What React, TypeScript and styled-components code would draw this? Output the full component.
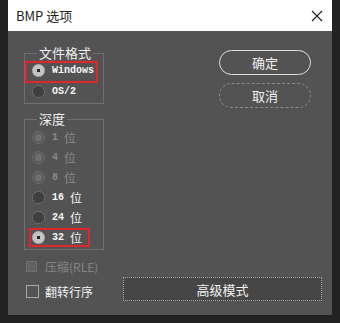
import * as React from "react";
import styled, { createGlobalStyle } from "styled-components";

const GlobalStyle = createGlobalStyle`
  html, body {
    margin: 0;
    padding: 0;
    background: #222222;
  }
  body {
    font-family: "Noto Sans CJK SC", "Liberation Sans", sans-serif;
  }
`;

const Page = styled.div`
  width: 340px;
  height: 323px;
  padding: 0 8px;
  box-sizing: border-box;
  background: #222222;
`;

const Dialog = styled.div`
  width: 324px;
  height: 315px;
  background: #535353;
  display: flex;
  flex-direction: column;
`;

const TitleBar = styled.div`
  height: 31px;
  flex: none;
  background: #ffffff;
  display: flex;
  align-items: center;
  justify-content: space-between;
  padding: 0 9px 0 8px;
`;

const Title = styled.span`
  font-size: 13px;
  color: #1e1e1e;
  line-height: 31px;
`;

const Body = styled.div`
  flex: 1;
  padding: 15px 10px 0 16px;
  display: flex;
  flex-direction: column;
`;

const TopRow = styled.div`
  display: flex;
  align-items: flex-start;
`;

const Groups = styled.div`
  display: flex;
  flex-direction: column;
  gap: 8px;
  width: 80px;
`;

const Group = styled.fieldset<{ $pad?: number }>`
  margin: 0;
  padding: ${(p) => p.$pad ?? 0}px 0 ${(p) => (p.$pad ? 2 : 1)}px 0;
  border: 1px solid #707070;
  min-width: 0;
`;

const Legend = styled.legend`
  margin-left: 12px;
  padding: 0 2px;
  font-size: 13px;
  line-height: 14px;
  color: #f0f0f0;
`;

const Row = styled.div<{ $h: number; $disabled?: boolean }>`
  position: relative;
  height: ${(p) => p.$h}px;
  display: flex;
  align-items: center;
  padding-left: 7px;
  color: ${(p) => (p.$disabled ? "#8a8a8a" : "#f6f6f6")};
`;

const Highlight = styled.span<{ $l: number; $t: number; $w: number; $h: number }>`
  position: absolute;
  left: ${(p) => p.$l}px;
  top: ${(p) => p.$t}px;
  width: ${(p) => p.$w}px;
  height: ${(p) => p.$h}px;
  box-sizing: border-box;
  border: 2px solid #e3262b;
  pointer-events: none;
`;

const Radio = styled.span<{ $checked?: boolean; $disabled?: boolean }>`
  width: 13px;
  height: 13px;
  box-sizing: border-box;
  border-radius: 50%;
  flex: none;
  border: 1px dotted ${(p) => (p.$disabled ? "#7a7a7a" : "#9a9a9a")};
  background: ${(p) =>
    p.$checked
      ? "radial-gradient(circle, #2a2a2a 0 1.5px, #c4c4c4 2px)"
      : p.$disabled
      ? "radial-gradient(circle, #6e6e6e 0 3px, #5c5c5c 4px)"
      : "#3f3f3f"};
  margin-right: 7px;
`;

const Num = styled.span`
  font-family: "Liberation Mono", "DejaVu Sans Mono", monospace;
  font-size: 10px;
  font-weight: 600;
  white-space: pre;
`;

const Unit = styled.span`
  font-size: 12px;
`;

const ButtonCol = styled.div`
  margin-left: auto;
  margin-right: 11px;
  margin-top: 4px;
  display: flex;
  flex-direction: column;
  gap: 8px;
`;

const PillButton = styled.div<{ $primary?: boolean }>`
  width: 92px;
  height: 25px;
  box-sizing: border-box;
  border-radius: 13px;
  border: 1px ${(p) => (p.$primary ? "solid #dcdcdc" : "dashed #8c8c8c")};
  display: flex;
  align-items: center;
  justify-content: center;
  font-size: 13px;
  color: #f2f2f2;
`;

const CheckRow = styled.div<{ $disabled?: boolean }>`
  display: flex;
  align-items: center;
  height: 16px;
  padding-left: 2px;
  margin-top: ${(p) => (p.$disabled ? 8 : 4)}px;
  font-size: 12px;
  color: ${(p) => (p.$disabled ? "#848484" : "#f2f2f2")};
`;

const Box = styled.span<{ $disabled?: boolean }>`
  width: ${(p) => (p.$disabled ? 11 : 13)}px;
  height: ${(p) => (p.$disabled ? 11 : 13)}px;
  box-sizing: border-box;
  flex: none;
  margin-right: ${(p) => (p.$disabled ? 8 : 6)}px;
  border: 1px ${(p) => (p.$disabled ? "dotted #7c7c7c" : "solid #a8a8a8")};
  background: ${(p) => (p.$disabled ? "#626262" : "transparent")};
`;

const BottomRow = styled.div`
  display: flex;
  align-items: center;
  margin-top: 3px;
`;

const WideButton = styled.div`
  margin-left: auto;
  width: 199px;
  height: 24px;
  box-sizing: border-box;
  border: 1px dotted #a8a8a8;
  background: #464646;
  display: flex;
  align-items: center;
  justify-content: center;
  font-size: 13px;
  color: #f2f2f2;
`;

const CloseIcon = () => (
  <svg width="12" height="12" viewBox="0 0 12 12">
    <path d="M1 1 L11 11 M11 1 L1 11" stroke="#1e1e1e" strokeWidth="1.1" />
  </svg>
);

const depths = [
  { n: "1 ", disabled: true },
  { n: "4 ", disabled: true },
  { n: "8 ", disabled: true },
  { n: "16 " },
  { n: "24 " },
  { n: "32 ", checked: true },
];

export default function App() {
  return (
    <Page>
      <GlobalStyle />
      <Dialog>
        <TitleBar>
          <Title>BMP 选项</Title>
          <CloseIcon />
        </TitleBar>
        <Body>
          <TopRow>
            <Groups>
              <Group>
                <Legend>文件格式</Legend>
                <Row $h={21}>
                  <Highlight $l={0} $t={1} $w={73} $h={22} />
                  <Radio $checked />
                  <Num>Windows</Num>
                </Row>
                <Row $h={21}>
                  <Radio />
                  <Num>OS/2</Num>
                </Row>
              </Group>
              <Group $pad={1}>
                <Legend>深度</Legend>
                {depths.map((d) => (
                  <Row key={d.n} $h={20} $disabled={d.disabled}>
                    {d.checked && <Highlight $l={4} $t={1} $w={61} $h={19} />}
                    <Radio $checked={d.checked} $disabled={d.disabled} />
                    <Num>{d.n}</Num>
                    <Unit>位</Unit>
                  </Row>
                ))}
              </Group>
            </Groups>
            <ButtonCol>
              <PillButton $primary>确定</PillButton>
              <PillButton>取消</PillButton>
            </ButtonCol>
          </TopRow>
          <CheckRow $disabled>
            <Box $disabled />
            压缩(RLE)
          </CheckRow>
          <BottomRow>
            <CheckRow>
              <Box />
              翻转行序
            </CheckRow>
            <WideButton>高级模式</WideButton>
          </BottomRow>
        </Body>
      </Dialog>
    </Page>
  );
}
